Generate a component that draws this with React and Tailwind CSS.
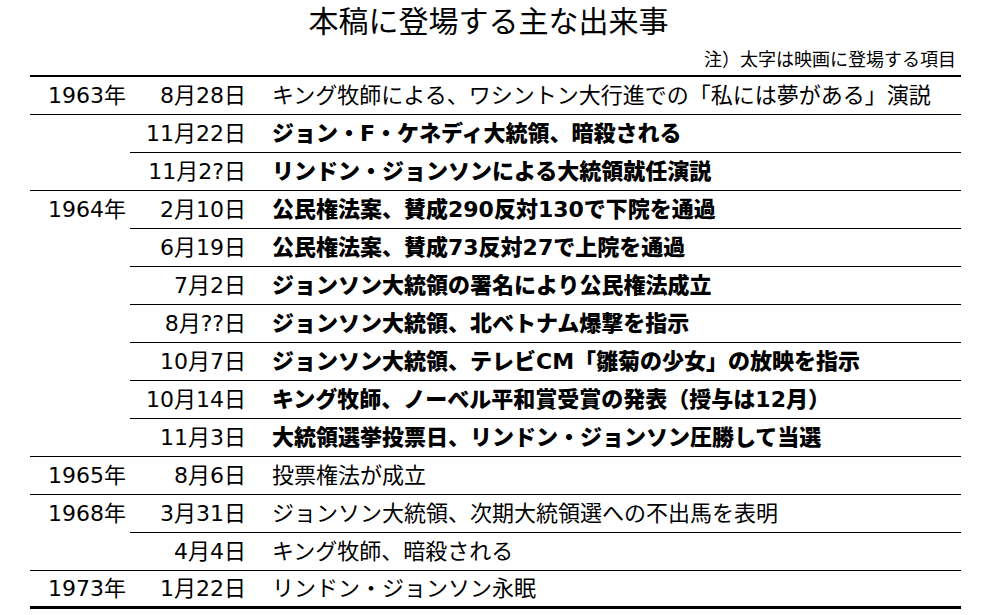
const events = [
    { year: '1963年', date: '8月28日', text: 'キング牧師による、ワシントン大行進での「私には夢がある」演説', bold: false, last: true },
    { year: '', date: '11月22日', text: 'ジョン・F・ケネディ大統領、暗殺される', bold: true, last: false },
    { year: '', date: '11月2?日', text: 'リンドン・ジョンソンによる大統領就任演説', bold: true, last: true },
    { year: '1964年', date: '2月10日', text: '公民権法案、賛成290反対130で下院を通過', bold: true, last: false },
    { year: '', date: '6月19日', text: '公民権法案、賛成73反対27で上院を通過', bold: true, last: false },
    { year: '', date: '7月2日', text: 'ジョンソン大統領の署名により公民権法成立', bold: true, last: false },
    { year: '', date: '8月??日', text: 'ジョンソン大統領、北ベトナム爆撃を指示', bold: true, last: false },
    { year: '', date: '10月7日', text: 'ジョンソン大統領、テレビCM「雛菊の少女」の放映を指示', bold: true, last: false },
    { year: '', date: '10月14日', text: 'キング牧師、ノーベル平和賞受賞の発表（授与は12月）', bold: true, last: false },
    { year: '', date: '11月3日', text: '大統領選挙投票日、リンドン・ジョンソン圧勝して当選', bold: true, last: true },
    { year: '1965年', date: '8月6日', text: '投票権法が成立', bold: false, last: true },
    { year: '1968年', date: '3月31日', text: 'ジョンソン大統領、次期大統領選への不出馬を表明', bold: false, last: false },
    { year: '', date: '4月4日', text: 'キング牧師、暗殺される', bold: false, last: true },
    { year: '1973年', date: '1月22日', text: 'リンドン・ジョンソン永眠', bold: false, last: true },
];

function EventRow({ item, isFinal }) {
    // year cell only carries the rule when the year group ends here
    const yearBorder = isFinal
        ? 'border-b-[3px] border-black'
        : item.last
            ? 'border-b border-black'
            : 'border-b border-transparent';
    const restBorder = isFinal ? 'border-b-[3px] border-black' : 'border-b border-black';

    return (
        <div className="flex">
            <div className={`w-[100px] h-[38px] flex items-center justify-end pr-[4px] ${yearBorder}`}>
                {item.year}
            </div>
            <div className={`flex-1 h-[38px] flex items-center ${restBorder}`}>
                <span className="w-[116px] text-right">{item.date}</span>
                <span className={`pl-[26px] whitespace-nowrap ${item.bold ? 'font-black' : ''}`}>
                    {item.text}
                </span>
            </div>
        </div>
    );
}

export default function App() {
    return (
        <div
            className="w-[998px] h-[615px] bg-white text-black overflow-hidden"
            style={{ fontFamily: '"DejaVu Sans", "Noto Sans CJK JP", sans-serif' }}
        >
            <div className="ml-[30px] w-[931px]">
                <h1 className="h-[44px] leading-[44px] text-[30px] text-center pr-[14px]">
                    本稿に登場する主な出来事
                </h1>
                <p className="h-[31px] leading-[31px] text-[18px] text-right pr-[5px]">
                    注）太字は映画に登場する項目
                </p>

                {/* timeline table */}
                <div className="border-t-2 border-black text-[22px] leading-none">
                    {events.map((item, i) => (
                        <EventRow key={i} item={item} isFinal={i === events.length - 1} />
                    ))}
                </div>
            </div>
        </div>
    );
}
